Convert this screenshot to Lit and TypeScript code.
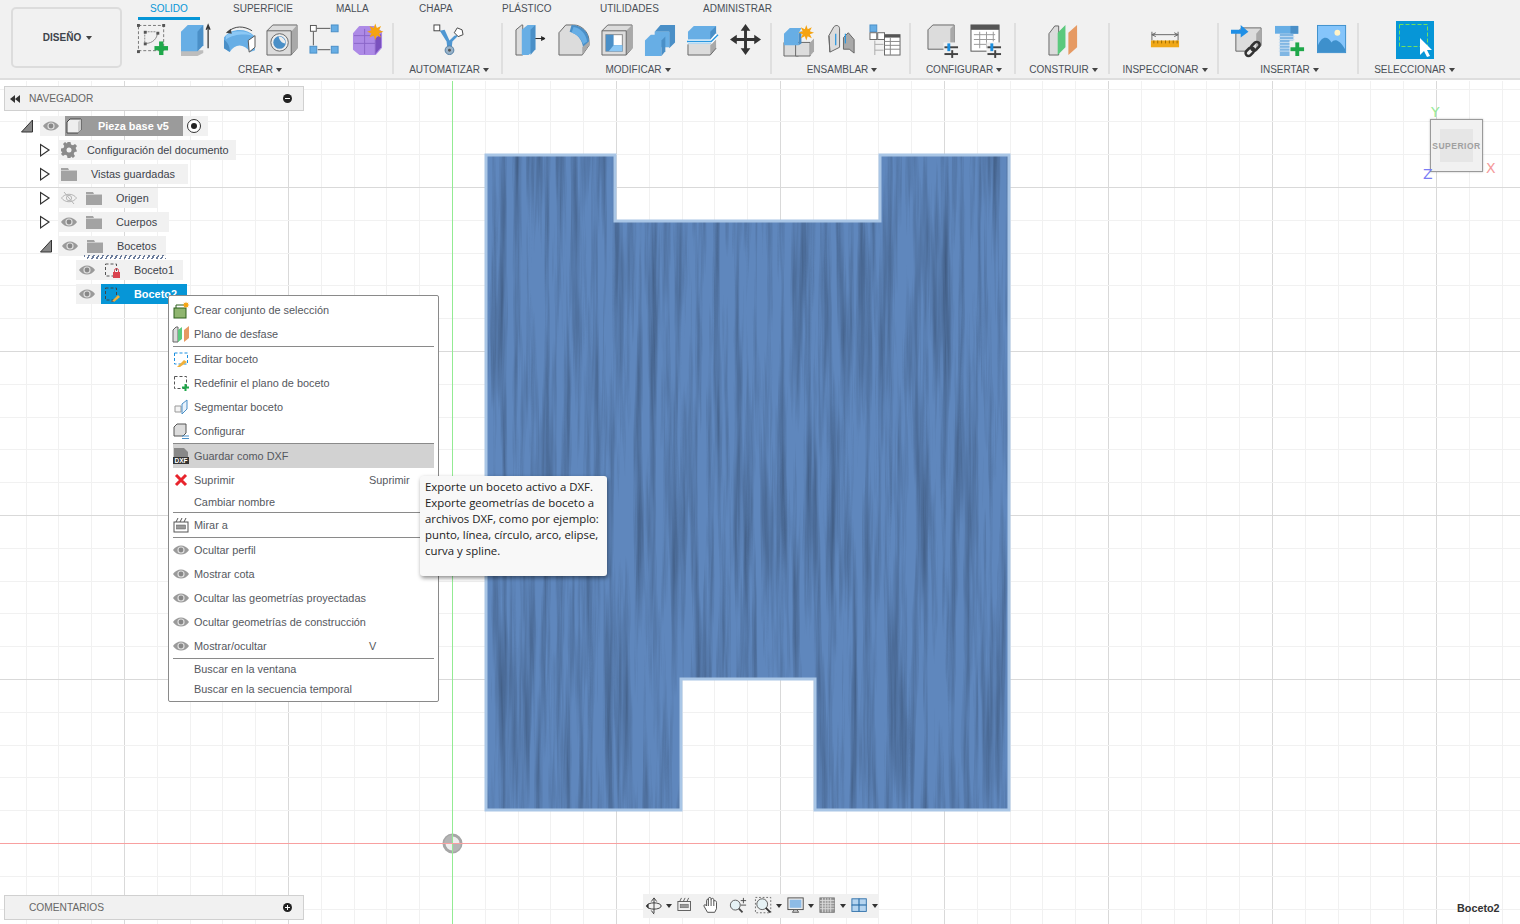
import { LitElement, html, css, svg } from 'lit';
import { customElement } from 'lit/decorators.js';

const BL = '#67aee5';
const BD = '#4a8fc7';
const GF = '#dcdcdc';
const GD = '#a9a9a9';
const GREEN = '#1fa84a';

const plus = (x: number, y: number, s = 13, w = 4, c = GREEN) => svg`
  <rect x=${x} y=${y + (s - w) / 2} width=${s} height=${w} fill=${c}/>
  <rect x=${x + (s - w) / 2} y=${y} width=${w} height=${s} fill=${c}/>`;

const star = (x: number, y: number, r = 7) => {
  const pts: string[] = [];
  for (let i = 0; i < 16; i++) {
    const a = (i * Math.PI) / 8;
    const rr = i % 2 ? r * 0.5 : r;
    pts.push(`${(x + Math.cos(a) * rr).toFixed(1)},${(y + Math.sin(a) * rr).toFixed(1)}`);
  }
  return svg`<polygon points=${pts.join(' ')} fill="#f5a30f"/>`;
};

const handle = (x: number, y: number) => svg`<rect x=${x} y=${y} width="3" height="3" fill="#555"/>`;

const sliders = (x: number, y: number) => svg`
  <rect x=${x} y=${y + 3} width="14" height="2" fill="#444"/>
  <rect x=${x + 3} y=${y} width="3" height="8" fill="#1b8fe0"/>
  <rect x=${x} y=${y + 10} width="14" height="2" fill="#444"/>
  <rect x=${x + 7} y=${y + 7} width="2" height="8" fill="#444"/>`;

const ICONS: Record<string, unknown> = {
  sketch: svg`
    <rect x="1.5" y="1.5" width="26" height="26" fill="none" stroke="#777" stroke-dasharray="3 2"/>
    <path d="M8 8V19M8 8H19" stroke="#888" fill="none" stroke-dasharray="2 1"/>
    <path d="M21 9C21 15 16 20 9 20" stroke="#888" fill="none"/>
    ${handle(0, 0)}${handle(26, 0)}${handle(0, 27)}${handle(7, 7)}${handle(20, 8)}${handle(7, 19)}
    ${plus(18, 18, 14, 4.5)}`,
  extrude: svg`
    <polygon points="1,27 24,27 24,30 18,33 1,33" fill="#bdbdbd"/>
    <polygon points="1,8 8,1 24,1 24,22 18,28 1,28" fill=${BL}/>
    <polygon points="18,8 24,1 24,22 18,28" fill=${BD}/>
    <path d="M29 25V3M27 6L29 1L31 6" stroke="#333" stroke-width="1.3" fill="none"/>`,
  sweep: svg`
    <path d="M1 14C8 4 24 4 32 12L33 27L28 29C22 20 12 20 7 29L1 25Z" fill=${BL}/>
    <path d="M1 16C6 20 7 24 7 29L1 25Z" fill=${BD}/>
    <path d="M3 12C10 6 24 6 31 12C23 10 11 10 3 16Z" fill="#8cc8f5"/>
    <polygon points="26,17 33,12 33,24 27,29" fill="#fff" stroke="#555"/>
    <path d="M4 9C12 1 22 2 30 7" stroke="#444" fill="none"/>
    <path d="M8 5L3 9L9 10" fill="#444"/>`,
  hole: svg`
    <polygon points="1,7 7,1 32,1 32,25 26,32 1,32" fill=${GF} stroke="#666"/>
    <polygon points="26,8 32,1 32,25 26,32" fill=${GD}/>
    <path d="M1 7H26V32" fill="none" stroke="#666"/>
    <circle cx="14" cy="19" r="9" fill="#eee" stroke="#666"/>
    <circle cx="14" cy="19" r="6.5" fill=${BD}/>
    <path d="M13 13A6.5 6.5 0 0 1 20 20C16 20 14 17 13 13Z" fill="#eee"/>`,
  pattern: svg`
    <rect x="1.5" y="1.5" width="6" height="6" fill="#fff" stroke="#555"/>
    <rect x="23" y="1" width="7" height="7" fill=${BL} stroke=${BD}/>
    <rect x="1" y="23" width="7" height="7" fill=${BL} stroke=${BD}/>
    <rect x="23" y="23" width="7" height="7" fill=${BL} stroke=${BD}/>
    <path d="M8 4.5H22M4.5 8V22M9 26.5H22" stroke="#555"/>`,
  form: svg`
    <path d="M2 10L8 3H22L30 8V24L24 31H8L2 26Z" fill="#ad8ae6" stroke-linejoin="round" stroke="#ad8ae6" stroke-width="2"/>
    <path d="M24 15L30 10V24L24 31Z" fill="#7a51be"/>
    <path d="M2 20H24M13 5V31M2 12H24V31" stroke="#8a66c8" fill="none"/>
    ${star(24, 8, 8.5)}`,
  auto: svg`
    <path d="M7 7L14 18L15 27H19L20 18L27 11L22 12L17 17L12 6Z" fill="#4f97d2"/>
    <rect x="1" y="1" width="6" height="6" fill="#fff" stroke="#444"/>
    <polygon points="25,4 30,6 31,11 26,13 22,9" fill="#fff" stroke="#444"/>
    <circle cx="17" cy="27" r="4.5" fill="#9ab3c8" stroke="#4f7ea5"/><circle cx="17" cy="27" r="1.5" fill="#555"/>`,
  press: svg`
    <polygon points="1,6 7,1 8,1 8,32 1,32" fill=${GF} stroke="#666"/>
    <polygon points="7,6 13,1 21,1 21,26 14,32 7,32" fill=${BL}/>
    <polygon points="16,6 21,1 21,26 16,32" fill=${BD}/>
    <path d="M21 15H30M27 13L31 15L27 17" stroke="#222" fill="#222"/>`,
  fillet: svg`
    <path d="M1 9L8 1H16C24 1 32 8 32 18V22L25 32H1Z" fill=${GF} stroke="#666"/>
    <path d="M14 1C24 1 32 8 32 18L26 25C25 16 20 10 12 8Z" fill=${BD}/>
    <path d="M16 3C23 4 29 10 30 18L26 21C24 15 20 11 14 9Z" fill=${BL}/>
    <polygon points="25,24 32,18 32,22 25,32" fill=${GD}/>`,
  shell: svg`
    <polygon points="1,7 7,1 32,1 32,25 26,32 1,32" fill=${GF} stroke="#666"/>
    <polygon points="26,7 32,1 32,25 26,32" fill=${GD}/>
    <rect x="5" y="11" width="17" height="17" fill="#fff" stroke="#888"/>
    <path d="M5 11H13V22H22V28H5Z" fill=${BD}/><path d="M13 22H22V28H8Z" fill="#8cc8f5"/>
    <path d="M1 7H26V32" fill="none" stroke="#666"/>`,
  combine: svg`
    <polygon points="11,8 17,1 32,1 32,19 26,25 26,8" fill=${BD}/>
    <polygon points="11,8 26,8 26,24 11,24" fill=${BL}/>
    <polygon points="1,17 7,11 18,11 18,33 1,33" fill=${BL}/>
    <polygon points="18,17 18,33 22,28 22,13" fill=${BD}/>`,
  split: svg`
    <polygon points="1,8 7,2 30,2 30,14 24,21 1,21" fill=${BL}/>
    <polygon points="24,8 30,2 30,14 24,21" fill=${BD}/>
    <polygon points="1,21 24,21 30,16 30,25 24,32 1,32" fill=${GF}/>
    <polygon points="24,22 30,16 30,25 24,32" fill=${GD}/>
    <path d="M1 18H25L31 11" stroke="#fff" stroke-width="4" fill="none"/>
    <path d="M0 18H25L32 11" stroke="#2b98e0" stroke-width="1.5" fill="none"/>
    <path d="M1 21V32H24L30 25" fill="none" stroke="#666"/>`,
  move: svg`
    <path d="M16 4V28M4 16H28" stroke="#333" stroke-width="3"/>
    <path d="M16 0L21 7H11ZM16 32L11 25H21ZM0 16L7 11V21ZM32 16L25 21V11Z" fill="#333"/>`,
  compnew: svg`
    <polygon points="1,19 16,19 16,33 1,33" fill=${GF} stroke="#666"/>
    <polygon points="13,19 28,19 28,33 13,33" fill=${GF} stroke="#666"/>
    <polygon points="28,19 32,15 32,28 28,33" fill=${GD}/>
    <polygon points="1,10 7,4 19,4 16,10 16,22 1,22" fill=${BL}/>
    <polygon points="16,10 19,7 19,20 16,22" fill=${BD}/>
    ${star(24, 9, 8)}`,
  joint: svg`
    <path d="M3 12L8 3C11 0 14 2 14 5V24L4 29Z" fill=${GF} stroke="#666"/>
    <path d="M18 14L23 9L29 16V30L24 26H18Z" fill=${GD} stroke="#666"/>
    <path d="M10 10V22" stroke="#2b98e0" stroke-width="1.3"/><path d="M20 10V20" stroke="#2b98e0" stroke-width="1.3"/>
    <path d="M3 12L4 29" stroke="#666"/>`,
  table: svg`
    <rect x="1" y="1" width="7" height="7" fill=${BL} stroke=${BD}/>
    <rect x="1" y="9" width="7" height="7" fill="#fff" stroke="#666"/><rect x="9" y="9" width="7" height="7" fill="#fff" stroke="#666"/>
    <path d="M6 17V32M6 21H15M6 27H15" stroke="#aaa"/>
    <rect x="16" y="11" width="16" height="21" fill="#fff" stroke="#666"/>
    <rect x="16" y="11" width="16" height="3" fill="#555"/>
    <path d="M16 18H32M16 22H32M16 26H32M22 14V32" stroke="#888"/>`,
  config: svg`
    <polygon points="1,6 6,1 28,1 28,22 24,26 1,26" fill=${GF} stroke="#666"/>
    <polygon points="24,5 28,1 28,22 24,26" fill=${GD}/>
    <rect x="17" y="19" width="16" height="15" fill="#f1f1f1"/>
    ${sliders(18, 20)}`,
  cfgtable: svg`
    <rect x="1" y="1" width="29" height="27" fill="#fff" stroke="#555"/>
    <rect x="1" y="1" width="29" height="5" fill="#555"/>
    <path d="M4 11H26M4 16H26M4 21H20M10 8V25M17 8V25M24 8V18" stroke="#999" fill="none"/>
    <rect x="17" y="19" width="16" height="15" fill="#f1f1f1"/>
    ${sliders(18, 20)}`,
  construct: svg`
    <polygon points="1,10 7,2 11,2 11,32 1,32" fill=${GF} stroke="#666"/>
    <polygon points="10,9 18,1 18,24 10,32" fill="#5bc97d"/>
    <polygon points="21,9 30,1 30,24 21,32" fill="#e69a63"/>`,
  measure: svg`
    <path d="M3 8V17M30 8V17M3 11H30M7 9L3 11L7 13M26 9L30 11L26 13" stroke="#666" fill="none"/>
    <rect x="2" y="17" width="29" height="7" fill="#f0a818"/>
    <path d="M5 17V20M9 17V20M13 17V20M17 17V20M21 17V20M25 17V20M29 17V20" stroke="#9a6a00"/>`,
  link: svg`
    <polygon points="5,10 11,4 31,4 31,22 26,28 5,28" fill=${GF} stroke="#666"/>
    <polygon points="26,10 31,4 31,22 26,28" fill=${GD}/>
    <path d="M0 6H10V1L18 8L10 14V10H0Z" fill="#1f8fe6"/>
    <g stroke="#333" stroke-width="2.6" fill="none" transform="rotate(-45 23 25)">
      <rect x="13" y="22" width="10" height="6" rx="3" fill="#eee"/><rect x="21" y="22" width="10" height="6" rx="3"/>
    </g>`,
  bolt: svg`
    <path d="M1 2H25V10H1Z" fill=${BL}/><rect x="17" y="2" width="8" height="8" fill=${BD}/>
    <path d="M6 10H20V33H6Z" fill="#80b6e3"/>
    <path d="M5 13H21M5 16H21M5 19H21M5 22H21M5 25H21M5 28H21" stroke="#c6def2"/>
    <rect x="16" y="17" width="17" height="17" fill="#f1f1f1"/>${plus(17, 19, 14, 4)}`,
  image: svg`
    <rect x="0.5" y="1.5" width="29" height="28" fill="#85c5fb" stroke="#3e90cc"/>
    <circle cx="21" cy="9" r="3" fill="#fff3c8"/>
    <path d="M1 22C5 12 11 12 15 19C18 15 23 16 29 26V29H1Z" fill="#3e90cc"/>`,
  select: svg`
    <rect width="38" height="38" fill="#0696d7"/>
    <rect x="3.5" y="3.5" width="28" height="22" fill="none" stroke="#6fe05f" stroke-dasharray="4 2"/>
    <path d="M24 17V34L28 30L31 36L34 35L31 29H36Z" fill="#fff"/>`,
  gear: svg`<path d="M6.5 0H9.5L10 2.5L12 3.3L14 2L16 4L14.6 6L15.5 8L16 9.5L13.5 10L12.7 12L14 14L12 16L10 14.6L9.5 16H6.5L6 13.5L4 12.7L2 14L0 12L1.4 10L0.5 9.5H0V6.5L2.5 6L3.3 4L2 2L4 0L6 1.4Z" fill="#8a8a8a"/><circle cx="8" cy="8" r="2.5" fill="#f1f1f1"/>`,
  folder: svg`<path d="M0 2H7L8 4H16V15H0Z" fill="#a3a3a3"/><rect y="4" width="16" height="1" fill="#ccc"/>`,
  eye: svg`<path d="M0 8C4 2 12 2 16 8C12 14 4 14 0 8Z" fill="#9a9a9a"/><circle cx="8" cy="8" r="3.6" fill="#ddd"/><circle cx="8" cy="8" r="2.4" fill="#888"/>`,
  eyeoff: svg`<path d="M0.5 8C4 3 12 3 15.5 8C12 13 4 13 0.5 8Z" fill="none" stroke="#b5b5b5"/><circle cx="8" cy="8" r="2.6" fill="none" stroke="#b5b5b5"/><path d="M3 2L13 14" stroke="#b5b5b5"/>`,
  box: svg`<polygon points="1,4 4,1 15,1 15,12 12,15 1,15" fill="#eee" stroke="#444"/><polygon points="12,4 15,1 15,12 12,15" fill="#ccc"/>`,
  sk1: svg`<rect x="1.5" y="2" width="11" height="12" fill="none" stroke="#555" stroke-dasharray="3 2"/><rect x="9" y="10" width="7" height="6" fill="#d9434e"/><path d="M10.5 10V8.5A2 2 0 0 1 14.5 8.5V10" stroke="#d9434e" fill="none"/>`,
  sk2: svg`<rect x="1.5" y="2" width="11" height="12" fill="none" stroke="#444" stroke-dasharray="3 2"/><path d="M8 15L14 9L16 11L10 16Z" fill="#f0b13c"/><path d="M7 16L8 14L10 16Z" fill="#666"/>`,
  selset: svg`<rect x="1" y="6" width="12" height="10" fill="#8fb56f" stroke="#2c5f1c"/><path d="M3 6V3H11" fill="none" stroke="#2c5f1c"/>${star(13, 3, 3.6)}`,
  plane: svg`<polygon points="0,4 3,1 5,1 5,16 0,16" fill=${GF} stroke="#666"/><polygon points="5,4 9,1 9,13 5,16" fill="#5bc97d"/><polygon points="11,4 16,0 16,12 11,16" fill="#e69a63"/>`,
  edit: svg`<rect x="1.5" y="2" width="13" height="11" fill="none" stroke="#1b8fe0" stroke-dasharray="3 2"/><path d="M4 16L11 9L14 11L7 16Z" fill="#f0b13c"/>`,
  redef: svg`<rect x="1.5" y="1.5" width="12" height="12" fill="none" stroke="#555" stroke-dasharray="3 2"/>${plus(9, 9, 7, 2)}`,
  slice: svg`<polygon points="2,7 8,7 8,13 2,13" fill="#f4f4f4" stroke="#999"/><polygon points="9,5 14,1 14,10 9,15" fill="#e8f2fb" stroke="#4a8fc7"/>`,
  cfg: svg`<polygon points="1,4 4,1 13,1 13,10 10,13 1,13" fill=${GF} stroke="#555"/><path d="M9 13H16M9 15.5H16" stroke="#4a8fc7"/>`,
  dxf: svg`<path d="M1 0H11L15 4V16H1Z" fill="#888"/><rect y="9" width="16" height="7" fill="#333"/><text x="8" y="15" font-size="6.5" font-weight="700" fill="#fff" text-anchor="middle" font-family="Liberation Sans, sans-serif">DXF</text>`,
  x: svg`<path d="M3 3L13 13M13 3L3 13" stroke="#e8242c" stroke-width="3"/>`,
  look: svg`<rect x="1" y="5" width="14" height="10" fill="none" stroke="#555"/><rect x="3.5" y="8" width="9" height="4" fill="#999" stroke="#555" stroke-width=".5"/><path d="M3 5L5 1M7 5L9 1M11 5L13 1" stroke="#555"/>`,
  orbit: svg`<path d="M10 2V18M7 5L10 1L13 5M7 15L10 19" stroke="#333" fill="none"/><ellipse cx="10" cy="10" rx="8" ry="3.5" fill="none" stroke="#333"/><path d="M1 10L4 7V13Z" fill="#333"/>`,
  hand: svg`<path d="M5 17L1 10C1 8 3 8 4 10V4C4 2 6 2 6 4V2C6 0 9 0 9 2V3C9 1 12 1 12 3V5C12 3 15 4 15 6V13L13 17Z" fill="#fff" stroke="#444"/><path d="M6 4V10M9 3V10M12 5V10" stroke="#444" fill="none"/>`,
  zoompm: svg`<circle cx="7" cy="9" r="5.5" fill="#e6f2f5" stroke="#555"/><path d="M11 13L15 17" stroke="#444" stroke-width="2"/><path d="M13 4H19M16 1V7M13 9H19" stroke="#444"/>`,
  zoomfit: svg`<rect x="0.5" y="0.5" width="17" height="17" fill="none" stroke="#666" stroke-dasharray="2 2"/><circle cx="8" cy="8" r="6" fill="#e6f2f5" stroke="#555"/><path d="M12 12L17 17" stroke="#333" stroke-width="2"/>`,
  display: svg`<rect x="1" y="1" width="17" height="13" fill="#eee" stroke="#444"/><rect x="3" y="3" width="13" height="9" fill="#8dbbe6"/><path d="M6 17H13L11 14H8Z" fill="#ccc" stroke="#555"/>`,
  grid: svg`<rect x="1" y="1" width="16" height="16" fill="#999" stroke="#777"/><path d="M4 1V17M7 1V17M10 1V17M13 1V17M1 4H17M1 7H17M1 10H17M1 13H17" stroke="#ddd"/>`,
  views: svg`<g fill="#b6d5f0" stroke="#2b6ea8"><rect x="1" y="2" width="8" height="7"/><rect x="9" y="2" width="8" height="7"/><rect x="1" y="9" width="8" height="7"/><rect x="9" y="9" width="8" height="7"/></g>`,
};

const icon = (name: string, size = 32, box = 33) =>
  html`<svg class="ic" width=${size} height=${size} viewBox="0 0 ${box} ${box}">${ICONS[name]}</svg>`;

const TABS = [
  { name: 'SOLIDO', width: 62 },
  { name: 'SUPERFICIE', width: 82 },
  { name: 'MALLA', width: 62 },
  { name: 'CHAPA', width: 62 },
  { name: 'PLÁSTICO', width: 77 },
  { name: 'UTILIDADES', width: 82 },
  { name: 'ADMINISTRAR', width: 90 },
];

const GROUPS = [
  { label: 'CREAR', width: 266, icons: ['sketch', 'extrude', 'sweep', 'hole', 'pattern', 'form'] },
  { label: 'AUTOMATIZAR', width: 109, icons: ['auto'] },
  { label: 'MODIFICAR', width: 269, icons: ['press', 'fillet', 'shell', 'combine', 'split', 'move'] },
  { label: 'ENSAMBLAR', width: 139, icons: ['compnew', 'joint', 'table'] },
  { label: 'CONFIGURAR', width: 105, icons: ['config', 'cfgtable'] },
  { label: 'CONSTRUIR', width: 94, icons: ['construct'] },
  { label: 'INSPECCIONAR', width: 109, icons: ['measure'] },
  { label: 'INSERTAR', width: 140, icons: ['link', 'bolt', 'image'] },
  { label: 'SELECCIONAR', width: 108, icons: ['select'] },
];

const TREE = [
  { left: 21, open: true, width: 168, cells: [] as string[], text: '', gap: 0 },
  { left: 40, width: 178, cells: ['gear'], text: 'Configuración del documento', gap: 10 },
  { left: 40, width: 130, cells: ['folder'], text: 'Vistas guardadas', gap: 14 },
  { left: 40, width: 100, cells: ['eyeoff', 'folder'], text: 'Origen', gap: 14 },
  { left: 40, width: 111, cells: ['eye', 'folder'], text: 'Cuerpos', gap: 14 },
  { left: 40, open: true, width: 107, cells: ['eye', 'folder'], text: 'Bocetos', gap: 14, wavy: true },
];

const MENU: Array<{ sep?: boolean; icon?: string; text?: string; key?: string; hi?: boolean; short?: boolean }> = [
  { icon: 'selset', text: 'Crear conjunto de selección' },
  { icon: 'plane', text: 'Plano de desfase' },
  { sep: true },
  { icon: 'edit', text: 'Editar boceto' },
  { icon: 'redef', text: 'Redefinir el plano de boceto' },
  { icon: 'slice', text: 'Segmentar boceto' },
  { icon: 'cfg', text: 'Configurar' },
  { sep: true },
  { icon: 'dxf', text: 'Guardar como DXF', hi: true },
  { icon: 'x', text: 'Suprimir', key: 'Suprimir' },
  { text: 'Cambiar nombre', short: true },
  { sep: true },
  { icon: 'look', text: 'Mirar a' },
  { sep: true },
  { icon: 'eye', text: 'Ocultar perfil' },
  { icon: 'eye', text: 'Mostrar cota' },
  { icon: 'eye', text: 'Ocultar las geometrías proyectadas' },
  { icon: 'eye', text: 'Ocultar geometrías de construcción' },
  { icon: 'eye', text: 'Mostrar/ocultar', key: 'V' },
  { sep: true },
  { text: 'Buscar en la ventana', short: true },
  { text: 'Buscar en la secuencia temporal', short: true },
];

const NAV = [
  { name: 'orbit', caret: true },
  { name: 'look' },
  { name: 'hand' },
  { name: 'zoompm' },
  { name: 'zoomfit', caret: true },
  { name: 'display', caret: true },
  { name: 'grid', caret: true },
  { name: 'views', caret: true },
];

const OX = 452;
const OY = 843;
const STEP = 32.8;
const SHAPE = '486,155 615,155 615,221 880,221 880,155 1009,155 1009,810 815,810 815,679 681,679 681,810 486,810';

@customElement('app-root')
export class AppRoot extends LitElement {
  static styles = css`
    :host {
      display: block;
      position: relative;
      width: 1520px;
      height: 924px;
      overflow: hidden;
      background: #fff;
      font-family: 'Liberation Sans', Arial, sans-serif;
      font-size: 10px;
      color: #4a4f57;
    }
    .ic { display: block; flex: none; overflow: visible; }

    .toolbar {
      display: flex;
      height: 78px;
      background: #f1f1f1;
      border-bottom: 2px solid #dedede;
      box-sizing: content-box;
    }
    .design-wrap { width: 128px; padding: 7px 0 0 11px; box-sizing: border-box; flex: none; }
    .design {
      width: 111px;
      height: 61px;
      box-sizing: border-box;
      border: 2px solid #dcdcdc;
      border-radius: 5px;
      display: flex;
      align-items: center;
      justify-content: center;
      gap: 5px;
      padding-left: 2px;
      font-weight: 700;
      color: #3d434b;
    }
    .caret { width: 0; height: 0; border: 3.5px solid transparent; border-top: 4px solid #444; border-bottom: 0; display: inline-block; flex: none; }
    .tabs { display: flex; height: 20px; padding-left: 10px; }
    .tab { padding: 3px 0 0 12px; margin-right: 21px; height: 20px; box-sizing: border-box; color: #4a4f57; white-space: nowrap; }
    .tab.on { color: #0696d7; border-bottom: 3px solid #0696d7; }
    .groups { display: flex; }
    .group {
      height: 51px;
      margin-top: 3px;
      display: flex;
      flex-direction: column;
      align-items: center;
      border-right: 2px solid #dfdfdf;
      box-sizing: border-box;
      padding-left: 3px;
    }
    .group:first-child { padding-left: 0; }
    .group:last-child { border-right: 0; }
    .icons { display: flex; flex: none; gap: 11px; height: 36px; align-items: center; margin-top: -1px; }
    .label { display: flex; align-items: center; gap: 3px; margin-top: 6px; white-space: nowrap; }

    .viewport { position: absolute; left: 0; top: 81px; width: 1520px; height: 843px; }
    .scene { position: absolute; left: 0; top: 0; display: block; }

    .panel {
      position: absolute;
      left: 4px;
      width: 300px;
      height: 25px;
      box-sizing: border-box;
      background: #f1f1f1;
      border: 1px solid #d0d0d0;
      display: flex;
      align-items: center;
      padding: 0 11px 0 5px;
      color: #666;
      font-size: 10.2px;
    }
    .panel .title { flex: 1; margin-left: 9px; }
    .dot { width: 9px; height: 9px; border-radius: 50%; background: #222; position: relative; }
    .dot::after { content: ''; position: absolute; left: 2px; right: 2px; top: 4px; height: 1px; background: #fff; }
    .dot.add::before { content: ''; position: absolute; top: 2px; bottom: 2px; left: 4px; width: 1px; background: #fff; }

    .tree { position: absolute; left: 0; top: 33px; font-size: 10.9px; }
    .row { display: flex; align-items: center; height: 24px; position: relative; }
    .arrow { flex: none; display: block; }
    .chip { display: flex; align-items: center; height: 20px; background: #f1f1f1; padding-left: 3px; box-sizing: border-box; position: relative; color: #3d434b; }
    .chip .ic + .ic { margin-left: 9px; }
    .wavy {
      position: absolute;
      left: 25px;
      right: 0;
      bottom: -3px;
      height: 4px;
      background: repeating-linear-gradient(120deg, #6a7c9c 0 1.5px, transparent 1.5px 4px);
    }
    .current { display: flex; align-items: center; width: 118px; height: 20px; margin-left: 6px; background: #9b9b9b; color: #fff; font-weight: 700; padding-left: 1px; box-sizing: border-box; }
    .current span { margin-left: 16px; }
    .radio { width: 12px; height: 12px; border: 1px solid #333; border-radius: 50%; margin-left: 4px; position: relative; background: #fff; }
    .radio::after { content: ''; position: absolute; inset: 3px; border-radius: 50%; background: #222; }
    .active { display: flex; align-items: center; width: 86px; height: 20px; margin-left: 6px; background: #0696d7; color: #fff; font-weight: 700; padding-left: 3px; box-sizing: border-box; }

    .menu {
      position: absolute;
      left: 168px;
      top: 214px;
      width: 271px;
      height: 407px;
      box-sizing: border-box;
      background: #fff;
      border: 1px solid #8a8a8a;
      border-radius: 2px;
      padding-top: 2px;
      font-size: 10.9px;
    }
    .item {
      display: flex;
      align-items: center;
      height: 24px;
      margin: 0 4px;
      color: #55585e;
    }
    .item.short { height: 20px; }
    .item.hi { background: #d2d2d2; }
    .item .cell { width: 16px; height: 16px; flex: none; margin-right: 5px; }
    .item .text { width: 175px; white-space: nowrap; }
    .sep { height: 1px; background: #8a8a8a; margin: 0 4px; }

    .tip {
      position: absolute;
      left: 420px;
      top: 395px;
      width: 187px;
      height: 100px;
      box-sizing: border-box;
      background: #f8f8f8;
      border-radius: 3px;
      box-shadow: 1px 2px 4px rgba(0, 0, 0, 0.45);
      padding: 3px 5px;
      font-family: 'Open Sans', sans-serif;
      font-size: 11.4px;
      line-height: 16px;
      color: #222;
      white-space: nowrap;
    }

    .navbar {
      position: absolute;
      left: 643px;
      top: 813px;
      width: 235px;
      height: 24px;
      background: #f1f1f1;
      display: flex;
      align-items: center;
      padding-left: 2px;
      box-sizing: border-box;
    }
    .tool { display: flex; align-items: center; gap: 3px; margin-right: 8px; }
    .tool.more { margin-right: 5px; }
    .tool .caret { border-top-color: #333; }
    .docname { position: absolute; left: 1457px; top: 821px; font-weight: 700; font-size: 10.8px; color: #333; }
    .cube {
      position: absolute;
      left: 1430px;
      top: 38px;
      width: 53px;
      height: 53px;
      box-sizing: border-box;
      background: #f1f1f1;
      border: 1px solid #9a9a9a;
      box-shadow: 0 0 2px rgba(0, 0, 0, 0.25);
      display: flex;
      align-items: center;
      justify-content: center;
    }
    .face { width: 33px; height: 33px; background: #e6e6e6; display: flex; align-items: center; justify-content: center; color: #a0a0a0; font-size: 8.5px; font-weight: 700; letter-spacing: 0.5px; white-space: nowrap; }
    .axis { position: absolute; font-size: 14px; font-family: 'DejaVu Sans', sans-serif; line-height: 1; }
  `;

  private renderScene() {
    const vs: number[] = [];
    const hs: number[] = [];
    for (let i = -14; i <= 33; i++) vs.push(i);
    for (let i = -3; i <= 24; i++) hs.push(i);
    return html`<svg class="scene" width="1520" height="843" viewBox="0 81 1520 843">
      <defs>
        <filter id="wood" x="0" y="0" width="100%" height="100%" color-interpolation-filters="sRGB">
          <feTurbulence type="fractalNoise" baseFrequency="0.14 0.005" numOctaves="4" seed="8"/>
          <feColorMatrix values="0 0 0 0 0.2 0 0 0 0 0.29 0 0 0 0 0.42 1.3 0 0 0 -0.53"/>
        </filter>
        <clipPath id="shape"><polygon points=${SHAPE}/></clipPath>
      </defs>
      ${vs.map((i) => {
        const x = Math.round(OX + i * STEP) + 0.5;
        return svg`<line x1=${x} x2=${x} y1="80" y2="924" stroke=${i % 5 === 0 ? '#d9d9d9' : '#f1f1f1'}/>`;
      })}
      ${hs.map((i) => {
        if (i === 0) return '';
        const y = Math.round(OY - i * STEP) + 0.5;
        return svg`<line x1="0" x2="1520" y1=${y} y2=${y} stroke=${i % 5 === 0 ? '#d9d9d9' : '#f1f1f1'}/>`;
      })}
      <line x1=${OX + 0.5} x2=${OX + 0.5} y1="80" y2="924" stroke="#93eb93"/>
      <line x1="0" x2="1520" y1=${OY + 0.5} y2=${OY + 0.5} stroke="#f8a0a0"/>
      <polygon points=${SHAPE} fill="#5f87bd"/>
      <g clip-path="url(#shape)"><rect x="486" y="155" width="523" height="655" filter="url(#wood)"/></g>
      <polygon points=${SHAPE} fill="none" stroke="#a9c6e6" stroke-width="3"/>
      <circle cx=${OX + 0.5} cy=${OY + 0.5} r="8.5" fill="#eee" stroke="#a6a6a6" stroke-width="3"/>
      <path d="M452.5 843.5H461A8.5 8.5 0 0 1 452.5 852ZM452.5 843.5H444A8.5 8.5 0 0 1 452.5 835Z" fill="#b5b5b5"/>
      <line x1=${OX + 0.5} x2=${OX + 0.5} y1="830" y2="857" stroke="#93eb93"/>
      <line x1="438" x2="468" y1=${OY + 0.5} y2=${OY + 0.5} stroke="#f8a0a0"/>
    </svg>`;
  }

  private renderTree() {
    const tri = html`<svg class="arrow" width="19" height="24" viewBox="0 0 19 24"><polygon points="0.5,18 11.5,18 11.5,6" fill="#888" stroke="#333"/></svg>`;
    const closed = html`<svg class="arrow" width="18" height="24" viewBox="0 0 18 24"><polygon points="0.5,6.5 9,12 0.5,18" fill="#fff" stroke="#333" stroke-width="1.2"/></svg>`;
    return html`<div class="tree">
      ${TREE.map((r, i) => html`<div class="row" style="margin-left:${r.left}px">
        ${r.open ? tri : closed}
        <div class="chip" style="width:${r.width}px">
          ${i === 0
            ? html`${icon('eye', 16, 16)}
                <div class="current">${icon('box', 16, 16)}<span>Pieza base v5</span></div>
                <div class="radio"></div>`
            : html`${r.cells.map((c) => icon(c, 16, 16))}<span style="margin-left:${r.gap}px">${r.text}</span>`}
          ${r.wavy ? html`<div class="wavy"></div>` : ''}
        </div>
      </div>`)}
      <div class="row" style="margin-left:76px">
        <div class="chip" style="width:107px">${icon('eye', 16, 16)}${icon('sk1', 16, 16)}<span style="margin-left:14px">Boceto1</span></div>
      </div>
      <div class="row" style="margin-left:76px">
        <div class="chip" style="width:111px">${icon('eye', 16, 16)}
          <div class="active">${icon('sk2', 16, 16)}<span style="margin-left:14px">Boceto2</span></div>
        </div>
      </div>
    </div>`;
  }

  render() {
    return html`
      <div class="toolbar">
        <div class="design-wrap"><div class="design">DISEÑO <i class="caret"></i></div></div>
        <div>
          <div class="tabs">
            ${TABS.map((t, i) => html`<div class="tab ${i === 0 ? 'on' : ''}" style="width:${t.width}px">${t.name}</div>`)}
          </div>
          <div class="groups">
            ${GROUPS.map((g) => html`<div class="group" style="width:${g.width}px">
              <div class="icons">${g.icons.map((n) => (n === 'select' ? icon(n, 38, 38) : icon(n)))}</div>
              <div class="label">${g.label} <i class="caret"></i></div>
            </div>`)}
          </div>
        </div>
      </div>

      <div class="viewport">
        ${this.renderScene()}

        <div class="panel" style="top:5px">
          <svg width="10" height="8" viewBox="0 0 10 8"><path d="M5 0V8L0 4ZM10 0V8L5 4Z" fill="#333"/></svg>
          <span class="title">NAVEGADOR</span><i class="dot"></i>
        </div>
        ${this.renderTree()}

        <div class="menu">
          ${MENU.map((m) =>
            m.sep
              ? html`<div class="sep"></div>`
              : html`<div class="item ${m.hi ? 'hi' : ''} ${m.short ? 'short' : ''}">
                  <div class="cell">${m.icon ? icon(m.icon, 16, 16) : ''}</div>
                  <span class="text">${m.text}</span><span>${m.key ?? ''}</span>
                </div>`
          )}
        </div>

        <div class="tip">
          Exporte un boceto activo a DXF.<br />Exporte geometrías de boceto a<br />archivos DXF, como por ejemplo:<br />punto, línea, círculo, arco, elipse,<br />curva y spline.
        </div>

        <div class="cube"><div class="face">SUPERIOR</div></div>
        <span class="axis" style="left:1431px;top:24px;color:#97ea97">Y</span>
        <span class="axis" style="left:1486px;top:80px;color:#f49a9a">X</span>
        <span class="axis" style="left:1423px;top:86px;color:#7a7cf5">Z</span>

        <div class="panel" style="top:814px">
          <span class="title" style="margin-left:19px">COMENTARIOS</span><i class="dot add"></i>
        </div>

        <div class="navbar">
          ${NAV.map((n) => html`<div class="tool ${n.caret ? 'more' : ''}">${icon(n.name, 18, 20)}${n.caret ? html`<i class="caret"></i>` : ''}</div>`)}
        </div>
        <div class="docname">Boceto2</div>
      </div>
    `;
  }
}
